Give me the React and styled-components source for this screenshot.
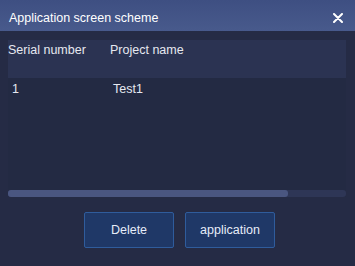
import React from "react";
import styled, { createGlobalStyle } from "styled-components";

const Global = createGlobalStyle`
  html, body {
    margin: 0;
    padding: 0;
    background: #252b45;
  }
  body {
    font-family: "Liberation Sans", Arial, sans-serif;
  }
`;

const Dialog = styled.div`
  width: 355px;
  height: 266px;
  display: flex;
  flex-direction: column;
  background: #252b45;
  overflow: hidden;
`;

const Header = styled.div`
  height: 31px;
  padding: 5px 11px 0 9px;
  box-sizing: border-box;
  display: flex;
  align-items: center;
  justify-content: space-between;
  background: linear-gradient(#3e4f82, #485a8c);
  color: #ffffff;
  font-size: 12.5px;
`;

const Close = styled.button`
  width: 12px;
  height: 12px;
  padding: 0;
  border: 0;
  background: none;
  display: flex;
  align-items: center;
  justify-content: center;
  cursor: pointer;
`;

const Table = styled.div`
  margin: 9px 9px 0 8px;
  height: 157px;
  display: flex;
  flex-direction: column;
  background: #232a43;
  font-size: 12.5px;
  color: #e6e8f0;
`;

const HeadRow = styled.div`
  height: 38px;
  display: flex;
  align-items: flex-start;
  padding-top: 3px;
  box-sizing: border-box;
  background: #2b3352;
`;

const Row = styled.div`
  height: 22px;
  display: flex;
  align-items: center;
`;

const Cell = styled.div`
  width: ${(p) => p.$w}px;
  padding-left: ${(p) => p.$pad || 0}px;
  box-sizing: border-box;
  white-space: nowrap;
`;

const Body = styled.div`
  flex: 1;
`;

const Track = styled.div`
  height: 7px;
  background: #2e3656;
  border-radius: 3px;
  display: flex;
`;

const Thumb = styled.div`
  width: 280px;
  background: #4a5680;
  border-radius: 3px;
`;

const Footer = styled.div`
  flex: 1;
  display: flex;
  justify-content: center;
  gap: 11px;
  padding-top: 15px;
  padding-left: 4px;
`;

const Button = styled.button`
  width: 90px;
  height: 36px;
  box-sizing: border-box;
  border: 1px solid #2f5c9c;
  border-radius: 2px;
  background: #1f3867;
  color: #e6ecf8;
  font-family: "Liberation Sans", Arial, sans-serif;
  font-size: 12.5px;
  cursor: pointer;
`;

export default function App() {
  return (
    <>
      <Global />
      <Dialog>
        <Header>
          <span>Application screen scheme</span>
          <Close aria-label="close">
            <svg width="10" height="10" viewBox="0 0 10 10">
              <path d="M1 1L9 9M9 1L1 9" stroke="#fff" strokeWidth="2" strokeLinecap="round" />
            </svg>
          </Close>
        </Header>
        <Table>
          <HeadRow>
            <Cell $w={102}>Serial number</Cell>
            <Cell $w={120}>Project name</Cell>
          </HeadRow>
          <Body>
            <Row>
              <Cell $w={102} $pad={4}>1</Cell>
              <Cell $w={120} $pad={3}>Test1</Cell>
            </Row>
          </Body>
          <Track>
            <Thumb />
          </Track>
        </Table>
        <Footer>
          <Button>Delete</Button>
          <Button>application</Button>
        </Footer>
      </Dialog>
    </>
  );
}
